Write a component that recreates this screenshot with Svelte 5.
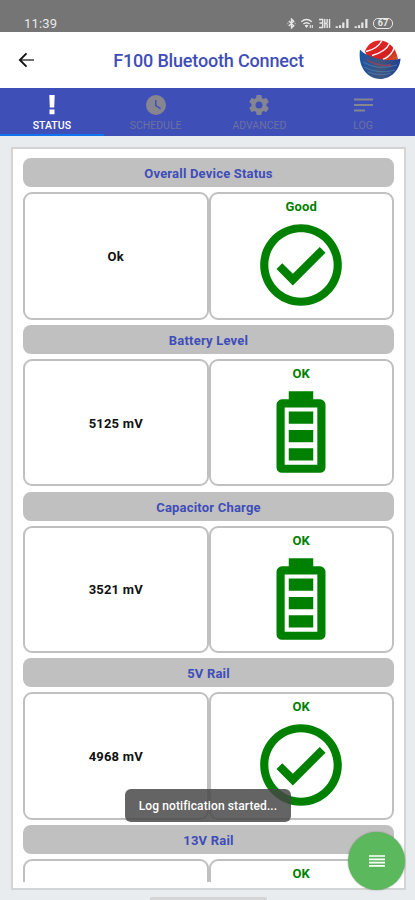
<script lang="ts">
	type Row = { title: string; value: string; state: string; icon: 'check' | 'battery' };

	const tabs = [
		{ name: 'STATUS', icon: 'alert' },
		{ name: 'SCHEDULE', icon: 'clock' },
		{ name: 'ADVANCED', icon: 'cog' },
		{ name: 'LOG', icon: 'text' }
	];

	const rows: Row[] = [
		{ title: 'Overall Device Status', value: 'Ok', state: 'Good', icon: 'check' },
		{ title: 'Battery Level', value: '5125 mV', state: 'OK', icon: 'battery' },
		{ title: 'Capacitor Charge', value: '3521 mV', state: 'OK', icon: 'battery' },
		{ title: '5V Rail', value: '4968 mV', state: 'OK', icon: 'check' },
		{ title: '13V Rail', value: '', state: 'OK', icon: 'check' }
	];

	let active = $state('STATUS');
</script>

<div class="screen">
	<div class="statusbar">
		<span class="time">11:39</span>
		<div class="indicators">
			<svg class="bluetooth" viewBox="0 0 10 12">
				<path d="M2 3.2 7.5 8.6 5 11V1l2.5 2.4L2 8.8M.6 6h.8M8.6 6h.8" />
			</svg>
			<svg class="wifi" viewBox="0 0 14 12">
				<path d="M.8 4.2Q6.5-.8 12.2 4.2M3 6.6q3.5-3 7 0" />
				<path class="solid" d="M4.4 8.2 6.5 11l2.1-2.8Q6.5 6.6 4.4 8.2ZM10 7.5h1.2V11H10zM12.2 7.5h1.2V11h-1.2z" />
			</svg>
			<svg class="volte" viewBox="0 0 13 12">
				<path d="M.5 1.7h4v3.8H1M4.5 5.5v4.8h-4M6.8 1v10M12 1v10M9.4 1v4.2M9.4 6.8V11M6.8 6h3" />
			</svg>
			{#each [0, 1] as sim (sim)}
				<svg class="signal" viewBox="0 0 15 12">
					<path class="solid" d="M0 9h2.4v2H0zM3.6 8H6v3H3.6zM7.2 5h2.4v6H7.2zM11.6 1H14v10h-2.4z" />
				</svg>
			{/each}
			<span class="charge">67</span>
		</div>
	</div>

	<header>
		<svg class="back" viewBox="0 0 18 16">
			<path class="shaft" d="M2 8h15" />
			<path d="M9 1 2 8l7 7" />
		</svg>
		<h1>F100 Bluetooth Connect</h1>
		<svg class="logo" viewBox="0 0 42 40">
			<defs>
				<linearGradient id="bowl" x1="0" x2="1" y1="0" y2="0">
					<stop offset="0" stop-color="#1a55a6" />
					<stop offset=".5" stop-color="#41567e" />
					<stop offset="1" stop-color="#1d3f98" />
				</linearGradient>
				<linearGradient id="ball" x1="0" x2="1" y1="0" y2="1">
					<stop offset="0" stop-color="#e8262a" />
					<stop offset=".6" stop-color="#d51f20" />
					<stop offset="1" stop-color="#cf6a2c" />
				</linearGradient>
			</defs>
			<path fill="url(#ball)" d="M6 11C9 4 14 .5 20 .5 30 .5 37 8 39 19l-8 5L8 17Z" />
			<path class="stripe" d="M7 11.5C14 10 20 6 23 .5M13 15.500C22 13 28 9 30.500 3.500M24 19.500C30 17 34 12 35.500 7" />
			<path fill="url(#bowl)" d="M1 9.500C5 14 10 16 17 18c8 2.500 16 3 24.500.5C41 30 32 39 21 39 9 39-1.500 28 1 9.500Z" />
			<path class="wave red" d="M8 20q12 7 24 5" />
			<path class="wave" d="M4 22q15 9 34 3M5 27q15 8 31 3M9 32q12 5 23 1" />
		</svg>
	</header>

	<nav>
		{#each tabs as tab (tab.name)}
			<button class={{ active: tab.name === active }} onclick={() => (active = tab.name)}>
				<svg viewBox="0 0 24 24">
					{#if tab.icon === 'alert'}
						<path d="M9.300 2h5.400l-.5 12.500H9.800zM9.500 16.500h5v4.800h-5z" />
					{:else if tab.icon === 'clock'}
						<path
							d="M12 2A10 10 0 0 0 2 12a10 10 0 0 0 10 10 10 10 0 0 0 10-10A10 10 0 0 0 12 2m4.2 14.2L11 13V7h1.5v5.2l4.5 2.7-.8 1.3Z"
						/>
					{:else if tab.icon === 'cog'}
						<path
							d="M12 15.5A3.5 3.5 0 0 1 8.5 12 3.5 3.5 0 0 1 12 8.5a3.5 3.5 0 0 1 3.5 3.5 3.5 3.5 0 0 1-3.5 3.5m7.43-2.53c.04-.32.07-.64.07-.97s-.03-.66-.07-1l2.11-1.63c.19-.15.24-.42.12-.64l-2-3.46c-.12-.22-.39-.31-.61-.22l-2.49 1c-.52-.39-1.06-.73-1.69-.98l-.37-2.65A.506.506 0 0 0 14 2h-4c-.25 0-.46.18-.5.42l-.37 2.65c-.63.25-1.17.59-1.69.98l-2.49-1c-.22-.09-.49 0-.61.22l-2 3.46c-.13.22-.07.49.12.64L4.57 11c-.04.34-.07.67-.07 1s.03.65.07.97l-2.11 1.66c-.19.15-.25.42-.12.64l2 3.46c.12.22.39.3.61.22l2.49-1.01c.52.4 1.06.74 1.69.99l.37 2.65c.04.24.25.42.5.42h4c.25 0 .46-.18.5-.42l.37-2.65c.63-.26 1.17-.59 1.69-.99l2.49 1.01c.22.08.49 0 .61-.22l2-3.46c.12-.22.07-.49-.12-.64l-2.11-1.66Z"
						/>
					{:else}
						<path d="M3 5.5h19v2H3zM3 11h19v2H3zM3 16.500h11v2H3z" />
					{/if}
				</svg>
				<span>{tab.name}</span>
			</button>
		{/each}
	</nav>

	<main>
		<div class="panel">
			<div class="list">
				{#each rows as row (row.title)}
					<h2>{row.title}</h2>
					<div class="cells">
						<div class="cell value">{row.value}</div>
						<div class="cell">
							<span class="state">{row.state}</span>
							<svg class="stateIcon" viewBox="0 0 24 24">
								{#if row.icon === 'check'}
									<path
										d="M12 2C6.5 2 2 6.5 2 12s4.5 10 10 10 10-4.5 10-10S17.5 2 12 2m0 18c-4.41 0-8-3.59-8-8s3.59-8 8-8 8 3.59 8 8-3.59 8-8 8m4.59-12.42L10 14.17l-2.59-2.58L6 13l4 4 8-8-1.41-1.42Z"
									/>
								{:else}
									<path
										fill-rule="evenodd"
										d="M9 2h6v2h1.67A1.33 1.33 0 0 1 18 5.33v15.34A1.33 1.33 0 0 1 16.67 22H7.33A1.33 1.33 0 0 1 6 20.67V5.33A1.33 1.33 0 0 1 7.33 4H9ZM8 6v14h8V6ZM9 7h6v3H9ZM9 11.5h6v3H9ZM9 16h6v3H9Z"
									/>
								{/if}
							</svg>
						</div>
					</div>
				{/each}
			</div>
		</div>
	</main>

	<div class="toast">Log notification started...</div>
	<button class="fab" aria-label="Menu">
		<svg viewBox="0 0 16 12"><path d="M0 1h16M0 4.3h16M0 7.6h16M0 10.9h16" /></svg>
	</button>
	<div class="homebar"></div>
</div>

<style>
	:global(body) {
		margin: 0;
	}
	.screen {
		position: relative;
		display: flex;
		flex-direction: column;
		width: 415px;
		height: 900px;
		overflow: hidden;
		background: #e9ecef;
		font-family: Roboto, 'Liberation Sans', sans-serif;
	}
	button {
		border: 0;
		padding: 0;
		font: inherit;
	}

	.statusbar {
		display: flex;
		justify-content: space-between;
		box-sizing: border-box;
		height: 32px;
		padding: 15px 22px 0 24px;
		background: #757575;
		color: #e8e8e8;
	}
	.time {
		font-size: 13px;
		line-height: 17px;
		letter-spacing: 0.2px;
	}
	.indicators {
		display: flex;
		align-items: center;
		height: 16px;
		gap: 4px;
	}
	.indicators svg {
		height: 11px;
		fill: none;
		stroke: #e8e8e8;
		stroke-width: 1.5;
	}
	.indicators .solid {
		fill: #e8e8e8;
		stroke: none;
	}
	.bluetooth {
		width: 9px;
	}
	.wifi {
		width: 14px;
	}
	.volte {
		width: 13px;
	}
	.signal {
		width: 15px;
	}
	.charge {
		box-sizing: border-box;
		width: 20px;
		height: 11px;
		border: 1.5px solid #e8e8e8;
		border-radius: 5px;
		font-size: 9px;
		font-weight: 700;
		line-height: 9px;
		text-align: center;
	}

	header {
		display: flex;
		align-items: center;
		justify-content: space-between;
		box-sizing: border-box;
		height: 56px;
		padding: 0 14px 0 18px;
		background: #fff;
	}
	.back {
		width: 17px;
		height: 16px;
		fill: none;
		stroke: #111;
		stroke-width: 2;
	}
	.back .shaft {
		stroke: #666;
	}
	h1 {
		margin: 1px 0 0 23px;
		color: #3f4db8;
		font-size: 18px;
		font-weight: 500;
		letter-spacing: -0.17px;
	}
	.logo {
		width: 42px;
		height: 40px;
	}
	.stripe {
		fill: none;
		stroke: #fff;
		stroke-width: 1.4;
	}
	.wave {
		fill: none;
		stroke: #5a86ac;
		stroke-width: 0.9;
		opacity: 0.75;
	}
	.wave.red {
		stroke: #9a4658;
		stroke-width: 2;
	}

	nav {
		display: grid;
		grid-template-columns: repeat(4, 1fr);
		height: 48px;
		background: #3f4fb8;
	}
	nav button {
		display: flex;
		flex-direction: column;
		align-items: center;
		box-sizing: border-box;
		padding-top: 5px;
		border-bottom: 2px solid transparent;
		background: none;
		color: #6c71a0;
		font-size: 10.5px;
		line-height: 15px;
	}
	nav svg {
		width: 24px;
		height: 24px;
		margin-bottom: 1px;
		fill: #85868f;
	}
	nav button.active {
		border-color: #1273ee;
		color: #fff;
		font-weight: 500;
	}
	nav .active svg {
		fill: #fff;
	}

	main {
		flex: 1;
		box-sizing: border-box;
		min-height: 0;
		padding: 11px 9px 10px 11px;
	}
	.panel {
		box-sizing: border-box;
		height: 100%;
		padding: 9px 10px 6px;
		border: 2px solid #d2d4d5;
		background: #fff;
	}
	.list {
		height: 100%;
		overflow: hidden;
	}
	h2 {
		height: 29px;
		margin: 0 0 5px;
		border-radius: 8px;
		background: #c0c0c0;
		color: #3f4db8;
		font-size: 13px;
		font-weight: 700;
		line-height: 31px;
		letter-spacing: 0.2px;
		text-align: center;
	}
	.cells {
		display: grid;
		grid-template-columns: 1fr 1fr;
		height: 127.5px;
		margin-bottom: 5.25px;
	}
	.cell {
		display: flex;
		flex-direction: column;
		align-items: center;
		box-sizing: border-box;
		min-height: 0;
		border: 2px solid #c0c0c0;
		border-radius: 9px;
		color: green;
		font-size: 13px;
		font-weight: 700;
		letter-spacing: 0.2px;
	}
	.value {
		justify-content: center;
		padding-top: 1px;
		color: #111;
	}
	.state {
		margin-top: 5px;
		line-height: 16px;
	}
	.stateIcon {
		flex: none;
		width: 98px;
		height: 98px;
		margin-top: 1px;
		fill: green;
	}

	.toast {
		position: absolute;
		top: 789px;
		left: 125px;
		width: 166px;
		height: 33px;
		border-radius: 6px;
		background: rgba(70, 70, 70, 0.84);
		color: #fff;
		font-size: 12px;
		font-weight: 500;
		line-height: 34px;
		letter-spacing: 0.11px;
		text-align: center;
		white-space: nowrap;
	}
	.fab {
		position: absolute;
		top: 832px;
		left: 348px;
		display: flex;
		align-items: center;
		justify-content: center;
		width: 57px;
		height: 58px;
		border-radius: 50%;
		background: #5cb85c;
		box-shadow: 0 0 2px rgba(0, 0, 0, 0.35);
	}
	.fab svg {
		width: 16px;
		height: 12px;
		stroke: #fff;
		stroke-width: 1.7;
	}
	.homebar {
		position: absolute;
		top: 897px;
		left: 150px;
		width: 117px;
		height: 3px;
		border-radius: 2px 2px 0 0;
		background: #d3d5d7;
	}
</style>
